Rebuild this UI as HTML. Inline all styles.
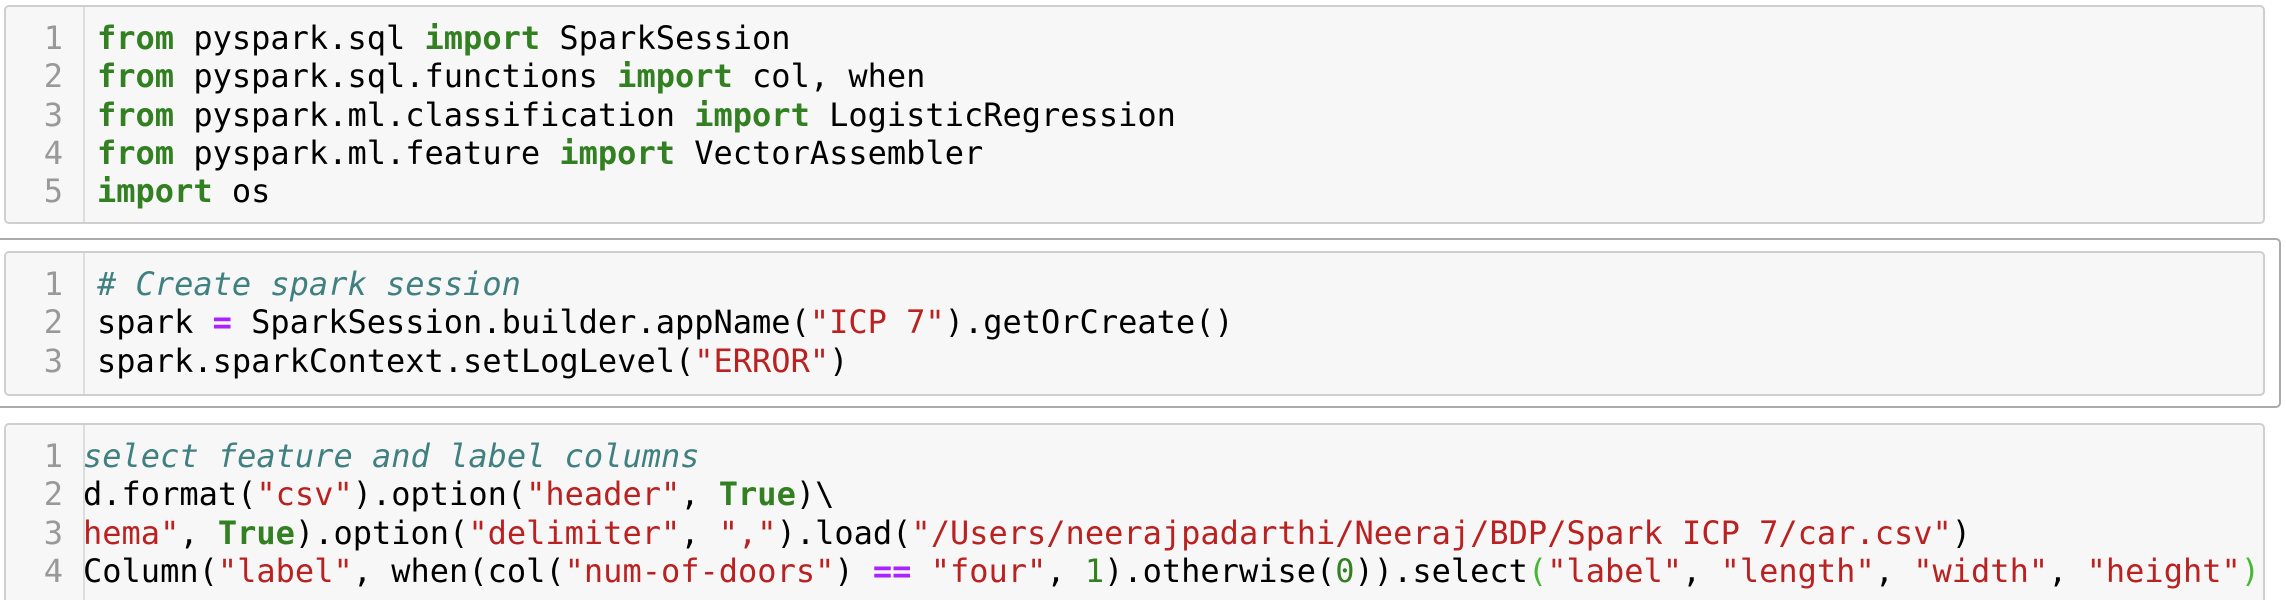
<!DOCTYPE html>
<html><head><meta charset="utf-8"><style>
html,body{margin:0;padding:0;background:#fff;width:2286px;height:600px;overflow:hidden;position:relative}
.box{position:absolute;left:4px;width:2261px;background:#f7f7f7;border:2px solid #cfcfcf;border-radius:5px;box-sizing:border-box;overflow:hidden}
.gut{position:absolute;left:0;top:0;bottom:0;width:77px;border-right:2px solid #ddd;background:#f7f7f7}
.ln{position:absolute;right:20px;color:#999;font:32px "DejaVu Sans Mono",monospace;line-height:38.25px;text-align:right}
.code{position:absolute;font:32px "DejaVu Sans Mono",monospace;line-height:38.25px;white-space:pre;color:#000}
.k{color:#338022;font-weight:bold}.s{color:#ba2121}.c{color:#408080;font-style:italic}.o{color:#aa22ff;font-weight:bold}.n{color:#338022}.g{color:#44b833}
.outer{position:absolute;left:-6px;top:238px;width:2287px;height:170px;border:2px solid #ababab;border-radius:5px;box-sizing:border-box}
</style></head><body>
<div class="box" style="top:5px;height:219px">
<div class="gut"><div class="ln" style="top:12px">1<br>2<br>3<br>4<br>5</div></div>
<div class="code" style="left:91px;top:12px"><span class="k">from</span> pyspark.sql <span class="k">import</span> SparkSession
<span class="k">from</span> pyspark.sql.functions <span class="k">import</span> col, when
<span class="k">from</span> pyspark.ml.classification <span class="k">import</span> LogisticRegression
<span class="k">from</span> pyspark.ml.feature <span class="k">import</span> VectorAssembler
<span class="k">import</span> os</div>
</div>
<div class="outer"></div>
<div class="box" style="top:251px;height:145px">
<div class="gut"><div class="ln" style="top:12px">1<br>2<br>3</div></div>
<div class="code" style="left:91px;top:12px"><span class="c"># Create spark session</span>
spark <span class="o">=</span> SparkSession.builder.appName(<span class="s">"ICP 7"</span>).getOrCreate()
spark.sparkContext.setLogLevel(<span class="s">"ERROR"</span>)</div>
</div>
<div class="box" style="top:423px;height:190px">
<div class="gut"><div class="ln" style="top:12px">1<br>2<br>3<br>4</div></div>
<div class="code" style="left:77px;top:12px"><span class="c">select feature and label columns</span>
d.format(<span class="s">"csv"</span>).option(<span class="s">"header"</span>, <span class="k">True</span>)\
<span class="s">hema"</span>, <span class="k">True</span>).option(<span class="s">"delimiter"</span>, <span class="s">","</span>).load(<span class="s">"/Users/neerajpadarthi/Neeraj/BDP/Spark ICP 7/car.csv"</span>)
Column(<span class="s">"label"</span>, when(col(<span class="s">"num-of-doors"</span>) <span class="o">==</span> <span class="s">"four"</span>, <span class="n">1</span>).otherwise(<span class="n">0</span>)).select<span class="g">(</span><span class="s">"label"</span>, <span class="s">"length"</span>, <span class="s">"width"</span>, <span class="s">"height"</span><span class="g">)</span></div>
</div>
</body></html>
